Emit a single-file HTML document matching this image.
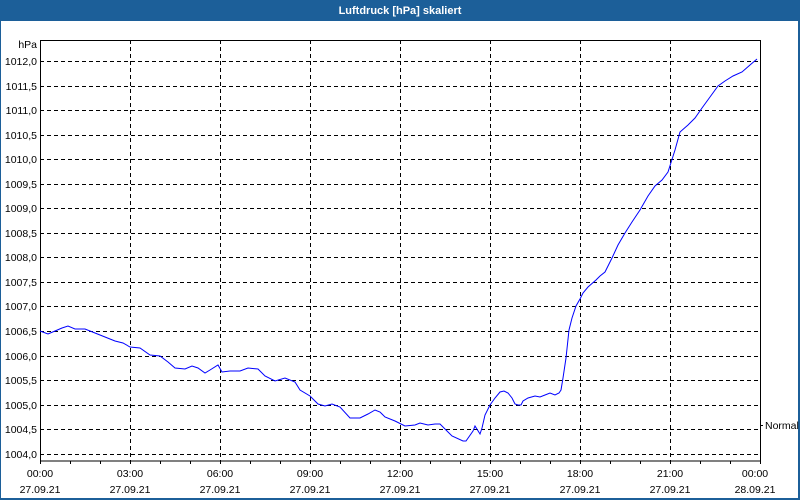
<!DOCTYPE html>
<html><head><meta charset="utf-8"><style>
html,body{margin:0;padding:0;width:800px;height:500px;overflow:hidden;background:#fff}
</style></head><body>
<svg width="800" height="500" xmlns="http://www.w3.org/2000/svg" font-family="Liberation Sans, DejaVu Sans, sans-serif" font-size="10.5">
<rect x="0" y="0" width="800" height="500" fill="#1c5f99"/>
<rect x="1" y="21" width="797" height="477" fill="#fff"/>
<text x="400" y="14" fill="#fff" font-weight="bold" text-anchor="middle" font-size="11">Luftdruck [hPa] skaliert</text>
<g stroke="#000" stroke-dasharray="4,3" stroke-width="1">
<line x1="40" x2="760" y1="61.5" y2="61.5"/><line x1="40" x2="760" y1="86.5" y2="86.5"/><line x1="40" x2="760" y1="110.5" y2="110.5"/><line x1="40" x2="760" y1="135.5" y2="135.5"/><line x1="40" x2="760" y1="159.5" y2="159.5"/><line x1="40" x2="760" y1="184.5" y2="184.5"/><line x1="40" x2="760" y1="208.5" y2="208.5"/><line x1="40" x2="760" y1="233.5" y2="233.5"/><line x1="40" x2="760" y1="257.5" y2="257.5"/><line x1="40" x2="760" y1="282.5" y2="282.5"/><line x1="40" x2="760" y1="306.5" y2="306.5"/><line x1="40" x2="760" y1="331.5" y2="331.5"/><line x1="40" x2="760" y1="356.5" y2="356.5"/><line x1="40" x2="760" y1="380.5" y2="380.5"/><line x1="40" x2="760" y1="405.5" y2="405.5"/><line x1="40" x2="760" y1="429.5" y2="429.5"/><line x1="40" x2="760" y1="454.5" y2="454.5"/>
<line y1="40" y2="461" x1="130.5" x2="130.5"/><line y1="40" y2="461" x1="220.5" x2="220.5"/><line y1="40" y2="461" x1="310.5" x2="310.5"/><line y1="40" y2="461" x1="400.5" x2="400.5"/><line y1="40" y2="461" x1="490.5" x2="490.5"/><line y1="40" y2="461" x1="580.5" x2="580.5"/><line y1="40" y2="461" x1="670.5" x2="670.5"/>
</g>
<rect x="40.5" y="40.5" width="720" height="420.5" fill="none" stroke="#000"/>
<g stroke="#000">
<path d="M70.5 461v3M100.5 461v3M130.5 461v3M160.5 461v3M190.5 461v3M220.5 461v3M250.5 461v3M280.5 461v3M310.5 461v3M340.5 461v3M370.5 461v3M400.5 461v3M430.5 461v3M460.5 461v3M490.5 461v3M520.5 461v3M550.5 461v3M580.5 461v3M610.5 461v3M640.5 461v3M670.5 461v3M700.5 461v3M730.5 461v3M760.5 461v3M40.5 461v3M760 425.5h3"/>
</g>
<polyline fill="none" stroke="#0000ff" stroke-width="1" points="40,331 48,334 55,331 62,328 68,326 75,329 85,329 95,333 105,337 115,341 123,343 130,347 140,348 150,355 160,356 168,362 175,368 185,369 192,366 198,368 205,373 210,370 218,365 222,372 230,371 240,371 248,368 258,369 265,376 275,381 285,378 295,382 300,390 310,396 318,404 325,406 332,404 340,407 350,418 360,418 368,414 375,410 380,412 385,417 395,421 405,426 415,425 420,423 428,425 435,424 440,424 448,432 452,436 463,441 466,441 473,431 475,426 480,434 482,428 485,415 490,405 495,398 500,392 504,391 508,393 512,398 515,404 518,405 521,405 523,401 528,398 535,396 540,397 545,395 550,393 555,395 559,393 561,390 563,378 566,358 569,330 572,318 576,306 580,299 583,293 588,287 596,280 600,276 605,272 612,258 618,245 625,233 632,222 640,210 648,196 655,186 662,180 668,172 675,150 680,132 688,125 695,118 702,108 710,97 718,86 725,81 733,76 742,72 750,65 757,59"/>
<g fill="#000" text-anchor="end">
<text x="37" y="48">hPa</text>
<text x="37" y="65">1012,0</text><text x="37" y="90">1011,5</text><text x="37" y="114">1011,0</text><text x="37" y="139">1010,5</text><text x="37" y="163">1010,0</text><text x="37" y="188">1009,5</text><text x="37" y="212">1009,0</text><text x="37" y="237">1008,5</text><text x="37" y="261">1008,0</text><text x="37" y="286">1007,5</text><text x="37" y="310">1007,0</text><text x="37" y="335">1006,5</text><text x="37" y="360">1006,0</text><text x="37" y="384">1005,5</text><text x="37" y="409">1005,0</text><text x="37" y="433">1004,5</text><text x="37" y="458">1004,0</text>
</g>
<text x="765" y="429" fill="#000">Normal</text>
<g fill="#000" text-anchor="middle">
<text x="40" y="477">00:00</text><text x="40" y="493">27.09.21</text>
<text x="130" y="477">03:00</text><text x="130" y="493">27.09.21</text>
<text x="220" y="477">06:00</text><text x="220" y="493">27.09.21</text>
<text x="310" y="477">09:00</text><text x="310" y="493">27.09.21</text>
<text x="400" y="477">12:00</text><text x="400" y="493">27.09.21</text>
<text x="490" y="477">15:00</text><text x="490" y="493">27.09.21</text>
<text x="580" y="477">18:00</text><text x="580" y="493">27.09.21</text>
<text x="670" y="477">21:00</text><text x="670" y="493">27.09.21</text>
<text x="755" y="477">00:00</text><text x="755" y="493">28.09.21</text>
</g>
</svg>
</body></html>
